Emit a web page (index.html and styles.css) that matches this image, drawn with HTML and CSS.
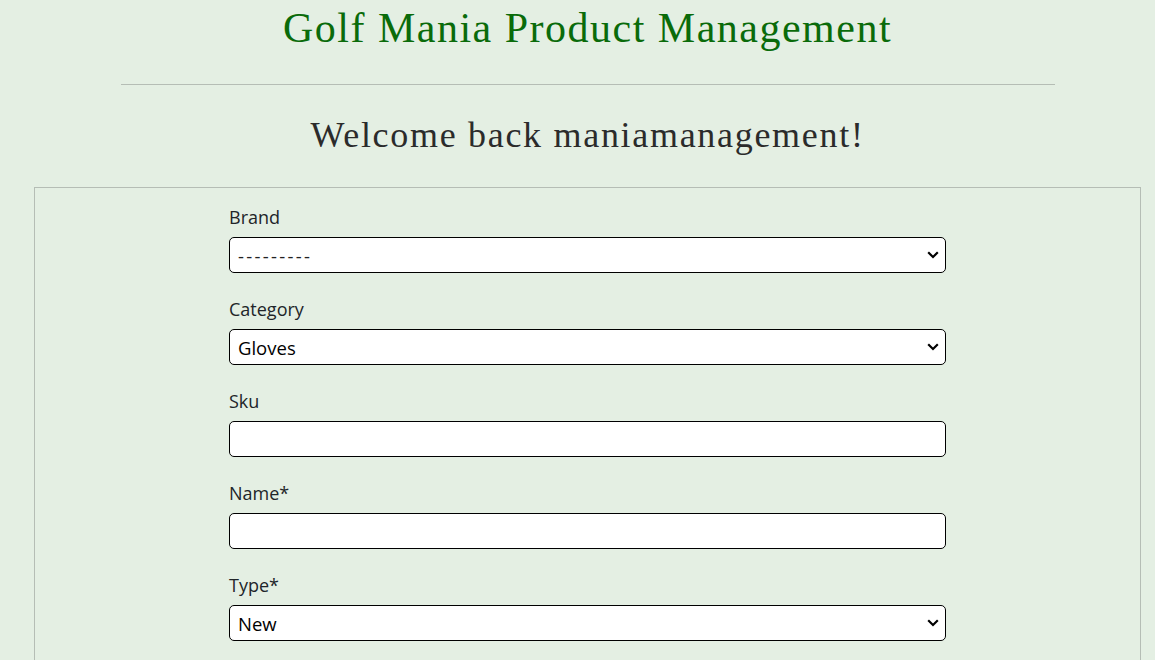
FILE: index.html
```html
<!DOCTYPE html>
<html lang="en">
<head>
<meta charset="utf-8">
<title>Golf Mania Product Management</title>
<link rel="stylesheet" href="styles.css">
</head>
<body>
<header class="site-header">
  <h1 class="site-title">Golf Mania Product Management</h1>
  <hr class="divider">
  <h2 class="welcome">Welcome back maniamanagement!</h2>
</header>
<main class="panel">
  <form class="product-form">
    <div class="field">
      <label class="field-label" for="brand">Brand</label>
      <select id="brand" class="control select select-empty">
        <option>---------</option>
      </select>
    </div>
    <div class="field">
      <label class="field-label" for="category">Category</label>
      <select id="category" class="control select">
        <option>Gloves</option>
      </select>
    </div>
    <div class="field">
      <label class="field-label" for="sku">Sku</label>
      <input id="sku" class="control" type="text">
    </div>
    <div class="field">
      <label class="field-label" for="name">Name*</label>
      <input id="name" class="control" type="text">
    </div>
    <div class="field">
      <label class="field-label" for="type">Type*</label>
      <select id="type" class="control select">
        <option>New</option>
      </select>
    </div>
  </form>
</main>
</body>
</html>
```
FILE: styles.css
```css
* { box-sizing: border-box; }
html, body {
  margin: 0;
  padding: 0;
  background: #e4efe3;
}
body {
  font-family: "Open Sans", "Noto Sans", sans-serif;
  color: #212529;
}
.site-header {
  display: flex;
  flex-direction: column;
  align-items: center;
  padding-left: 20px;
}
.site-title {
  margin: 0;
  padding-top: 4px;
  font-family: "Liberation Serif", serif;
  font-weight: normal;
  font-size: 42px;
  line-height: 48px;
  letter-spacing: 1.5px;
  color: #0a6b0a;
}
.divider {
  width: 934px;
  margin: 32px 0 0 0;
  border: 0;
  border-top: 1px solid #b5bdb5;
}
.welcome {
  margin: 28px 0 0 0;
  font-family: "Liberation Serif", serif;
  font-weight: normal;
  font-size: 36px;
  line-height: 44px;
  letter-spacing: 1.7px;
  color: #2b2b2b;
}
.panel {
  margin: 30px 14px 0 34px;
  border: 1px solid #b5bdb5;
  border-bottom: 0;
  height: 480px;
  padding-top: 16px;
  display: flex;
  justify-content: center;
}
.product-form {
  width: 717px;
  padding-top: 1px;
  display: flex;
  flex-direction: column;
  gap: 24px;
}
.field {
  display: flex;
  flex-direction: column;
  gap: 8px;
}
.field-label {
  font-size: 18px;
  line-height: 24px;
}
.control {
  width: 100%;
  height: 36px;
  border: 1px solid #000;
  border-radius: 5px;
  background-color: #fff;
  font-family: "Open Sans", "Noto Sans", sans-serif;
  font-size: 18.5px;
  color: #000;
  padding: 0 8px;
}
.select {
  appearance: none;
  -webkit-appearance: none;
  background-image: url("data:image/svg+xml;utf8,<svg xmlns='http://www.w3.org/2000/svg' width='12' height='8' viewBox='0 0 12 8'><path d='M1.2 1.3 L6 6 L10.8 1.3' fill='none' stroke='black' stroke-width='2.2'/></svg>");
  background-repeat: no-repeat;
  background-position: right 6px center;
  background-size: 12px 8px;
}
.select-empty {
  letter-spacing: 2.3px;
  color: #222;
}
```
